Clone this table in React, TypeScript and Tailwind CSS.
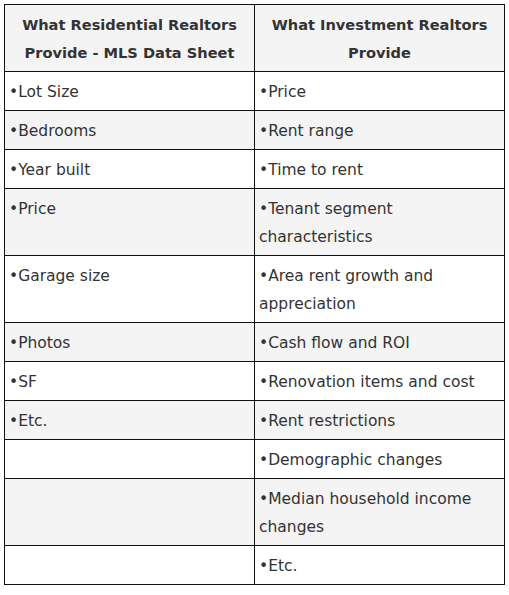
const rows: [string, string][] = [
  ["•Lot Size", "•Price"],
  ["•Bedrooms", "•Rent range"],
  ["•Year built", "•Time to rent"],
  ["•Price", "•Tenant segment characteristics"],
  ["•Garage size", "•Area rent growth and appreciation"],
  ["•Photos", "•Cash flow and ROI"],
  ["•SF", "•Renovation items and cost"],
  ["•Etc.", "•Rent restrictions"],
  ["", "•Demographic changes"],
  ["", "•Median household income changes"],
  ["", "•Etc."],
];

export default function App() {
  return (
    <div className="bg-white min-h-screen p-1 font-['DejaVu_Sans',sans-serif] text-[#333] text-[15.5px] leading-[28px]">
      <table className="w-[501px] border-collapse table-fixed">
        <thead>
          <tr className="bg-[#f4f4f4]">
            <th className="w-[250px] border border-[#111] px-1 pt-[6px] pb-[4px] text-[14.6px] font-bold text-center align-top">
              What Residential Realtors Provide - MLS Data Sheet
            </th>
            <th className="border border-[#111] px-1 pt-[6px] pb-[4px] text-[14.6px] font-bold text-center align-top">
              What Investment Realtors Provide
            </th>
          </tr>
        </thead>
        <tbody>
          {rows.map(([left, right], i) => (
            <tr key={i} className={i % 2 === 1 ? "bg-[#f4f4f4]" : "bg-white"}>
              <td className="border border-[#111] px-1 pt-[6px] pb-[4px] align-top">{left}</td>
              <td className="border border-[#111] px-1 pt-[6px] pb-[4px] align-top">{right}</td>
            </tr>
          ))}
        </tbody>
      </table>
    </div>
  );
}
